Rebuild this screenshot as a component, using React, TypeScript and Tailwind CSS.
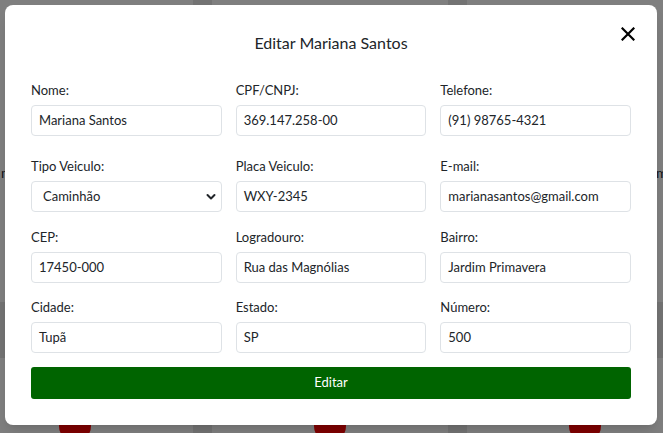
import React from "react";

const font = { fontFamily: 'Lato, "Open Sans", sans-serif' };

function Field({ label, value, select }: { label: string; value: string; select?: boolean }) {
  return (
    <div className="flex flex-col">
      <label className="h-5 text-[13px] leading-5 text-[#212529]">{label}</label>
      <div className="mt-[5px] flex h-[31px] items-center rounded border border-[#dee2e6] bg-white text-[13px] text-[#212529]">
        {select ? (
          <>
            <span className="flex-1 pl-[11px]">{value}</span>
            <svg width="10" height="8" viewBox="0 0 10 8" className="mr-[5px]">
              <path d="M1.5 2 L5 5.5 L8.5 2" fill="none" stroke="#212529" strokeWidth="2" strokeLinecap="round" strokeLinejoin="round" />
            </svg>
          </>
        ) : (
          <span className="pl-[7px]">{value}</span>
        )}
      </div>
    </div>
  );
}

export default function App() {
  return (
    <div className="relative h-[433px] w-[663px] overflow-hidden bg-[#e6e6e6]" style={font}>
      {/* background page */}
      <div className="ml-[-43px] flex flex-col gap-[56px]">
        <div className="flex h-[302px] gap-[19px]">
          <div className="w-[236px] shrink-0 bg-white pl-[44px] pt-[162px] text-[14px] text-[#1f2937]">m</div>
          <div className="w-[236px] shrink-0 bg-white" />
          <div className="w-[236px] shrink-0 bg-white pl-[189px] pt-[162px] text-[14px] text-[#1f2937]">m</div>
        </div>
        <div className="flex h-[120px] gap-[19px]">
          {[0, 1, 2].map((i) => (
            <div key={i} className="flex w-[236px] shrink-0 justify-center bg-white pt-[52px]">
              <div className="h-[32px] w-[32px] rounded-full bg-[#ff0000]" />
            </div>
          ))}
        </div>
      </div>

      {/* overlay */}
      <div className="absolute inset-0 bg-black/50" />

      {/* modal */}
      <div className="absolute left-[5px] top-[5px] flex h-[420px] w-[652px] flex-col rounded-lg bg-white px-[26px] shadow-lg">
        <div className="relative flex h-[75px] items-center justify-center pt-[1px]">
          <h2 className="text-[16px] text-[#212529]">Editar Mariana Santos</h2>
          <button className="absolute right-[-4px] top-[22px] flex h-[14px] w-[14px] items-center justify-center">
            <svg width="14" height="14" viewBox="0 0 14 14">
              <path d="M1.5 1.5 L12.5 12.5 M12.5 1.5 L1.5 12.5" stroke="#000" strokeWidth="2.2" strokeLinecap="square" />
            </svg>
          </button>
        </div>
        <div className="grid grid-cols-3 gap-x-[14px]">
          <Field label="Nome:" value="Mariana Santos" />
          <Field label="CPF/CNPJ:" value="369.147.258-00" />
          <Field label="Telefone:" value="(91) 98765-4321" />
        </div>
        <div className="mt-[20px] grid grid-cols-3 gap-x-[14px]">
          <Field label="Tipo Veiculo:" value="Caminhão" select />
          <Field label="Placa Veiculo:" value="WXY-2345" />
          <Field label="E-mail:" value="marianasantos@gmail.com" />
        </div>
        <div className="mt-[15px] grid grid-cols-3 gap-x-[14px]">
          <Field label="CEP:" value="17450-000" />
          <Field label="Logradouro:" value="Rua das Magnólias" />
          <Field label="Bairro:" value="Jardim Primavera" />
        </div>
        <div className="mt-[14px] grid grid-cols-3 gap-x-[14px]">
          <Field label="Cidade:" value="Tupã" />
          <Field label="Estado:" value="SP" />
          <Field label="Número:" value="500" />
        </div>
        <button className="mt-[14px] h-[32px] w-full rounded-[3px] bg-[#006400] text-[13px] text-white">Editar</button>
      </div>
    </div>
  );
}
